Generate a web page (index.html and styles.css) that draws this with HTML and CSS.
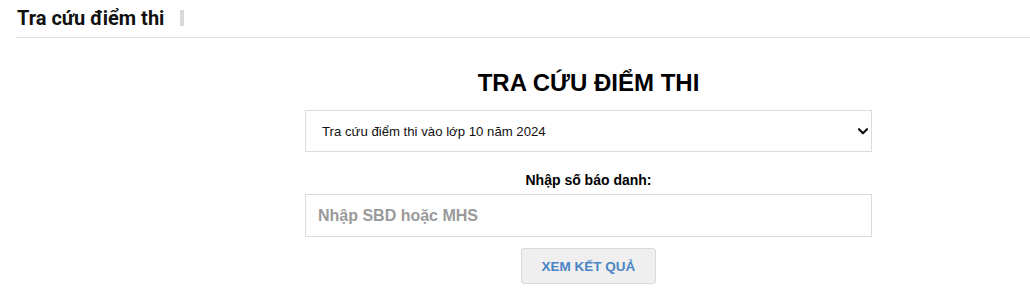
FILE: index.html
```html
<!DOCTYPE html>
<html lang="vi">
<head>
<meta charset="utf-8">
<title>Tra cứu điểm thi</title>
<link rel="stylesheet" href="styles.css">
</head>
<body>
<header class="page-head">
  <h2 class="page-title">Tra cứu điểm thi</h2>
  <span class="title-bar"></span>
</header>
<main class="lookup">
  <h1 class="lookup-title">TRA CỨU ĐIỂM THI</h1>
  <div class="select-wrap">
    <select class="exam-select">
      <option>Tra cứu điểm thi vào lớp 10 năm 2024</option>
    </select>
    <svg class="chevron" width="10" height="7" viewBox="0 0 10 7"><path d="M1 1.2 L5 5.2 L9 1.2" fill="none" stroke="#111" stroke-width="2.2" stroke-linecap="round" stroke-linejoin="round"/></svg>
  </div>
  <label class="sbd-label" for="sbd">Nhập số báo danh:</label>
  <input id="sbd" class="sbd-input" type="text" placeholder="Nhập SBD hoặc MHS">
  <button class="submit-btn" type="button">XEM KẾT QUẢ</button>
</main>
</body>
</html>
```

FILE: styles.css
```css
html, body {
  margin: 0;
  padding: 0;
  background: #fff;
}
body {
  font-family: "Liberation Sans", Arial, sans-serif;
  color: #000;
}
.page-head {
  display: flex;
  align-items: center;
  margin-left: 16px;
  height: 37px;
  border-bottom: 1px solid #e2e2e2;
  box-sizing: content-box;
}
.page-title {
  margin: 0 0 0 1px;
  font-family: Roboto, "Liberation Sans", sans-serif;
  font-weight: 700;
  font-size: 20px;
  line-height: 24px;
  color: #111;
  padding-bottom: 2px;
}
.title-bar {
  width: 4px;
  height: 16px;
  background: #d9d9d9;
  margin-left: 16px;
  margin-bottom: 2px;
}
.lookup {
  width: 567px;
  margin-left: 305px;
  display: flex;
  flex-direction: column;
  align-items: center;
}
.lookup-title {
  margin: 31px 0 0 0;
  font-size: 24px;
  line-height: 28px;
  font-weight: 700;
  color: #000;
}
.select-wrap {
  position: relative;
  width: 100%;
  margin-top: 13px;
}
.exam-select {
  display: block;
  width: 100%;
  height: 42px;
  box-sizing: border-box;
  border: 1px solid #dcdcdc;
  border-radius: 0;
  background: #fff;
  padding: 0 0 0 16px;
  font-family: "Liberation Sans", Arial, sans-serif;
  font-size: 13.2px;
  color: #111;
  appearance: none;
  -webkit-appearance: none;
  outline: none;
}
.chevron {
  position: absolute;
  right: 4px;
  top: 18px;
  pointer-events: none;
}
.sbd-label {
  margin-top: 20px;
  font-size: 14px;
  line-height: 17px;
  font-weight: 700;
  color: #000;
}
.sbd-input {
  width: 100%;
  height: 43px;
  box-sizing: border-box;
  margin-top: 5px;
  border: 1px solid #dcdcdc;
  padding: 0 0 0 12px;
  font-family: "Liberation Sans", Arial, sans-serif;
  font-size: 16px;
  font-weight: 700;
  color: #333;
  outline: none;
}
.sbd-input::placeholder {
  color: #9a9a9a;
}
.submit-btn {
  margin-top: 11px;
  width: 135px;
  height: 36px;
  border: 1px solid #dadada;
  border-radius: 3px;
  background: #efefef;
  color: #4a84c4;
  font-family: "Liberation Sans", Arial, sans-serif;
  font-size: 13.5px;
  font-weight: 700;
  padding: 0;
}
```
